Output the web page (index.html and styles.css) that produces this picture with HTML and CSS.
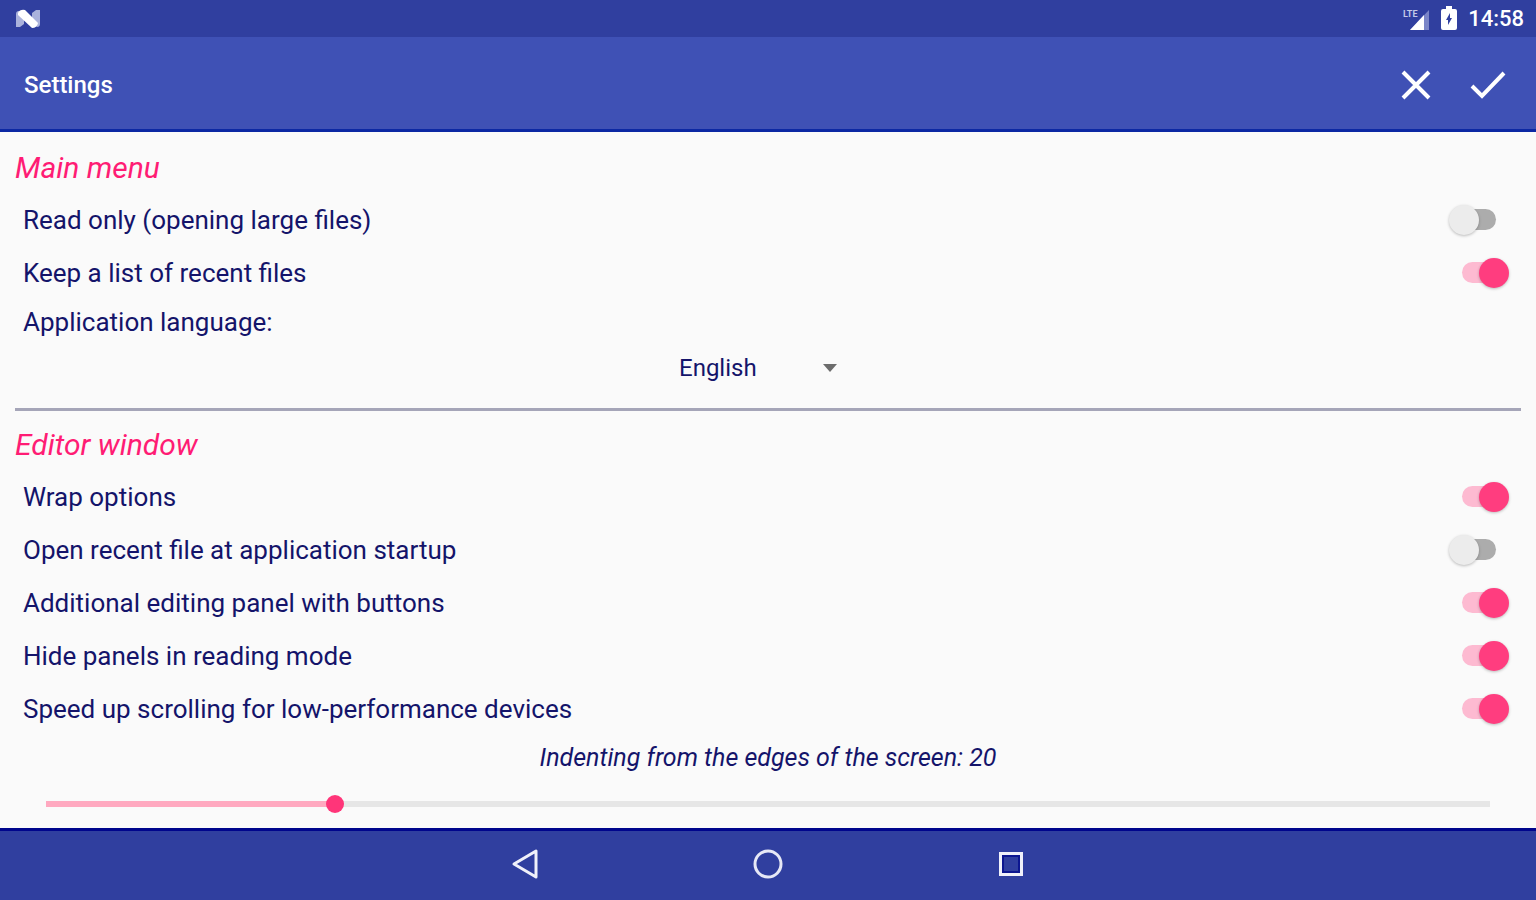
FILE: index.html
```html
<!DOCTYPE html>
<html lang="en">
<head>
<meta charset="utf-8">
<meta name="viewport" content="width=device-width, initial-scale=1">
<title>Settings</title>
<link rel="stylesheet" href="styles.css">
</head>
<body>
<div class="statusbar">
  <svg class="status-logo" width="26" height="20" viewBox="0 0 26 20" aria-hidden="true">
    <path d="M1 5 Q1 2 4 2 L9 6 V15 L5 18 H1Z M25 15 Q25 18 22 18 L17 14 V4 L21 1 H25Z" fill="#aab2dc"/>
    <path d="M3 4 Q5 0 10 1 L23 14 Q22 19 17 19 L3 6Z" fill="#fff"/>
  </svg>
  <div class="status-right">
    <svg width="28" height="26" viewBox="0 0 28 26" aria-hidden="true">
      <path d="M27 4V24H8Z" fill="#7a85c7"/>
      <path d="M22 9V24H8Z" fill="#fff"/>
      <text class="network" x="1" y="11">LTE</text>
    </svg>
    <svg width="16" height="26" viewBox="0 0 16 26" aria-hidden="true">
      <path fill-rule="evenodd" d="M5 0H11V3H14Q16 3 16 5V22Q16 24 14 24H2Q0 24 0 22V5Q0 3 2 3H5ZM9 7L5 14H7V19L11 12H9Z" fill="#fff"/>
    </svg>
    <span class="clock">14:58</span>
  </div>
</div>

<header class="appbar">
  <h1 class="title">Settings</h1>
  <div class="actions">
    <button class="action" type="button" aria-label="Cancel">
      <svg width="36" height="36" viewBox="0 0 36 36"><path d="M5 5L31 31M31 5L5 31" fill="none" stroke="#fff" stroke-width="4"/></svg>
    </button>
    <button class="action" type="button" aria-label="Apply">
      <svg width="36" height="36" viewBox="0 0 36 36"><path d="M2 19L12 29L34 6" fill="none" stroke="#fff" stroke-width="4"/></svg>
    </button>
  </div>
</header>

<main class="content">
  <section class="group">
    <h2 class="heading">Main menu</h2>
    <label class="row"><span>Read only (opening large files)</span><input class="switch" type="checkbox"></label>
    <label class="row"><span>Keep a list of recent files</span><input class="switch" type="checkbox" checked></label>
    <label class="row row-label" for="language">Application language:</label>
    <div class="dropdown">
      <select class="select" id="language"><option>English</option></select>
      <svg class="arrow" width="14" height="8" viewBox="0 0 14 8" aria-hidden="true"><path d="M0 0H14L7 8Z" fill="#6c6c6c"/></svg>
    </div>
  </section>
  <hr class="divider">
  <section class="group">
    <h2 class="heading">Editor window</h2>
    <label class="row"><span>Wrap options</span><input class="switch" type="checkbox" checked></label>
    <label class="row"><span>Open recent file at application startup</span><input class="switch" type="checkbox"></label>
    <label class="row"><span>Additional editing panel with buttons</span><input class="switch" type="checkbox" checked></label>
    <label class="row"><span>Hide panels in reading mode</span><input class="switch" type="checkbox" checked></label>
    <label class="row"><span>Speed up scrolling for low-performance devices</span><input class="switch" type="checkbox" checked></label>
    <label class="slider-label" for="indent">Indenting from the edges of the screen: 20</label>
    <input class="slider" id="indent" type="range" min="0" max="100" value="20">
  </section>
</main>

<nav class="navbar" aria-label="System">
  <button class="nav-button" type="button" aria-label="Back">
    <svg width="30" height="34" viewBox="0 0 30 34"><path d="M26 4V30L4 17Z" fill="none" stroke="#f0f1fa" stroke-width="3" stroke-linejoin="round"/></svg>
  </button>
  <button class="nav-button" type="button" aria-label="Home">
    <svg width="34" height="34" viewBox="0 0 34 34"><circle cx="17" cy="17" r="13" fill="none" stroke="#e6e8f6" stroke-width="3"/></svg>
  </button>
  <button class="nav-button" type="button" aria-label="Overview">
    <svg width="34" height="34" viewBox="0 0 34 34"><path d="M5 5H29V29H5Z" fill="#f0f1fa"/><path d="M8 8H26V26H8Z" fill="#0c1690"/><path d="M10 10H24V24H10Z" fill="#303f9f"/></svg>
  </button>
</nav>
</body>
</html>
```
FILE: styles.css
```css
* { box-sizing: border-box; }

body {
  margin: 0;
  min-height: 100vh;
  display: flex;
  flex-direction: column;
  background: #fafafa;
  color: #14146a;
  font-family: Roboto, "Liberation Sans", sans-serif;
  font-size: 26px;
  line-height: 32px;
}

button {
  padding: 0;
  border: 0;
  background: none;
  cursor: pointer;
}

svg { display: block; }

.statusbar {
  display: flex;
  align-items: center;
  justify-content: space-between;
  height: 37px;
  padding: 0 12px 0 15px;
  background: #303f9f;
  color: #fff;
}

.status-right {
  display: flex;
  align-items: center;
  gap: 11px;
}

.network {
  fill: #c3c9e8;
  font-size: 9px;
  font-weight: 700;
}

.clock {
  font-size: 22px;
  font-weight: 500;
}

.appbar {
  display: flex;
  align-items: center;
  justify-content: space-between;
  height: 95px;
  padding: 3px 30px 0 24px;
  background: #3f51b5;
  border-bottom: 3px solid #0c28a3;
  color: #fff;
}

.title {
  margin: 0;
  font-size: 24px;
  font-weight: 500;
}

.actions {
  display: flex;
  gap: 36px;
}

.content {
  flex: 1;
  padding: 9px 15px 0;
}

.group {
  display: flex;
  flex-direction: column;
}

.heading {
  margin: 0;
  padding: 11px 0 9px;
  color: #ff1c74;
  font-size: 30px;
  font-style: italic;
  font-weight: 400;
}

.row {
  display: flex;
  align-items: center;
  justify-content: space-between;
  min-height: 53px;
  padding: 0 12px 0 8px;
}

.row-label { min-height: 46px; }

.switch {
  appearance: none;
  display: grid;
  align-items: center;
  width: 60px;
  height: 30px;
  margin: 0;
  cursor: pointer;
}

.switch::before,
.switch::after {
  content: "";
  grid-area: 1 / 1;
}

.switch::before {
  justify-self: center;
  width: 34px;
  height: 21px;
  border-radius: 11px;
  background: #acacac;
}

.switch::after {
  width: 30px;
  height: 30px;
  border-radius: 50%;
  background: #ececec;
  box-shadow: 0 1px 3px rgba(0, 0, 0, 0.25);
}

.switch:checked::before { background: #fdbad1; }

.switch:checked::after {
  justify-self: end;
  background: #ff3d7f;
}

.dropdown {
  display: grid;
  align-items: center;
  align-self: center;
  width: 178px;
}

.select {
  grid-area: 1 / 1;
  appearance: none;
  height: 46px;
  padding: 0;
  border: 0;
  background: none;
  color: inherit;
  font: inherit;
  font-size: 24px;
}

.arrow {
  grid-area: 1 / 1;
  justify-self: end;
  margin-right: 20px;
  pointer-events: none;
}

.divider {
  width: 100%;
  height: 3px;
  margin: 17px 0 7px;
  border: 0;
  background: #a5a5b8;
}

.slider-label {
  padding: 7px 0 6px;
  text-align: center;
  font-size: 25px;
  font-style: italic;
}

.slider {
  appearance: none;
  height: 48px;
  margin: 0 22px;
  background: linear-gradient(to right, #ffa9c0 20%, #e6e6e6 20%) center / calc(100% - 18px) 6px no-repeat;
}

.slider::-webkit-slider-thumb {
  appearance: none;
  width: 18px;
  height: 18px;
  border-radius: 50%;
  background: #ff3579;
}

.navbar {
  display: flex;
  justify-content: center;
  height: 72px;
  padding-bottom: 3px;
  background: #303f9f;
  border-top: 3px solid #00058c;
}

.nav-button {
  display: flex;
  align-items: center;
  justify-content: center;
  width: 243px;
}
```
